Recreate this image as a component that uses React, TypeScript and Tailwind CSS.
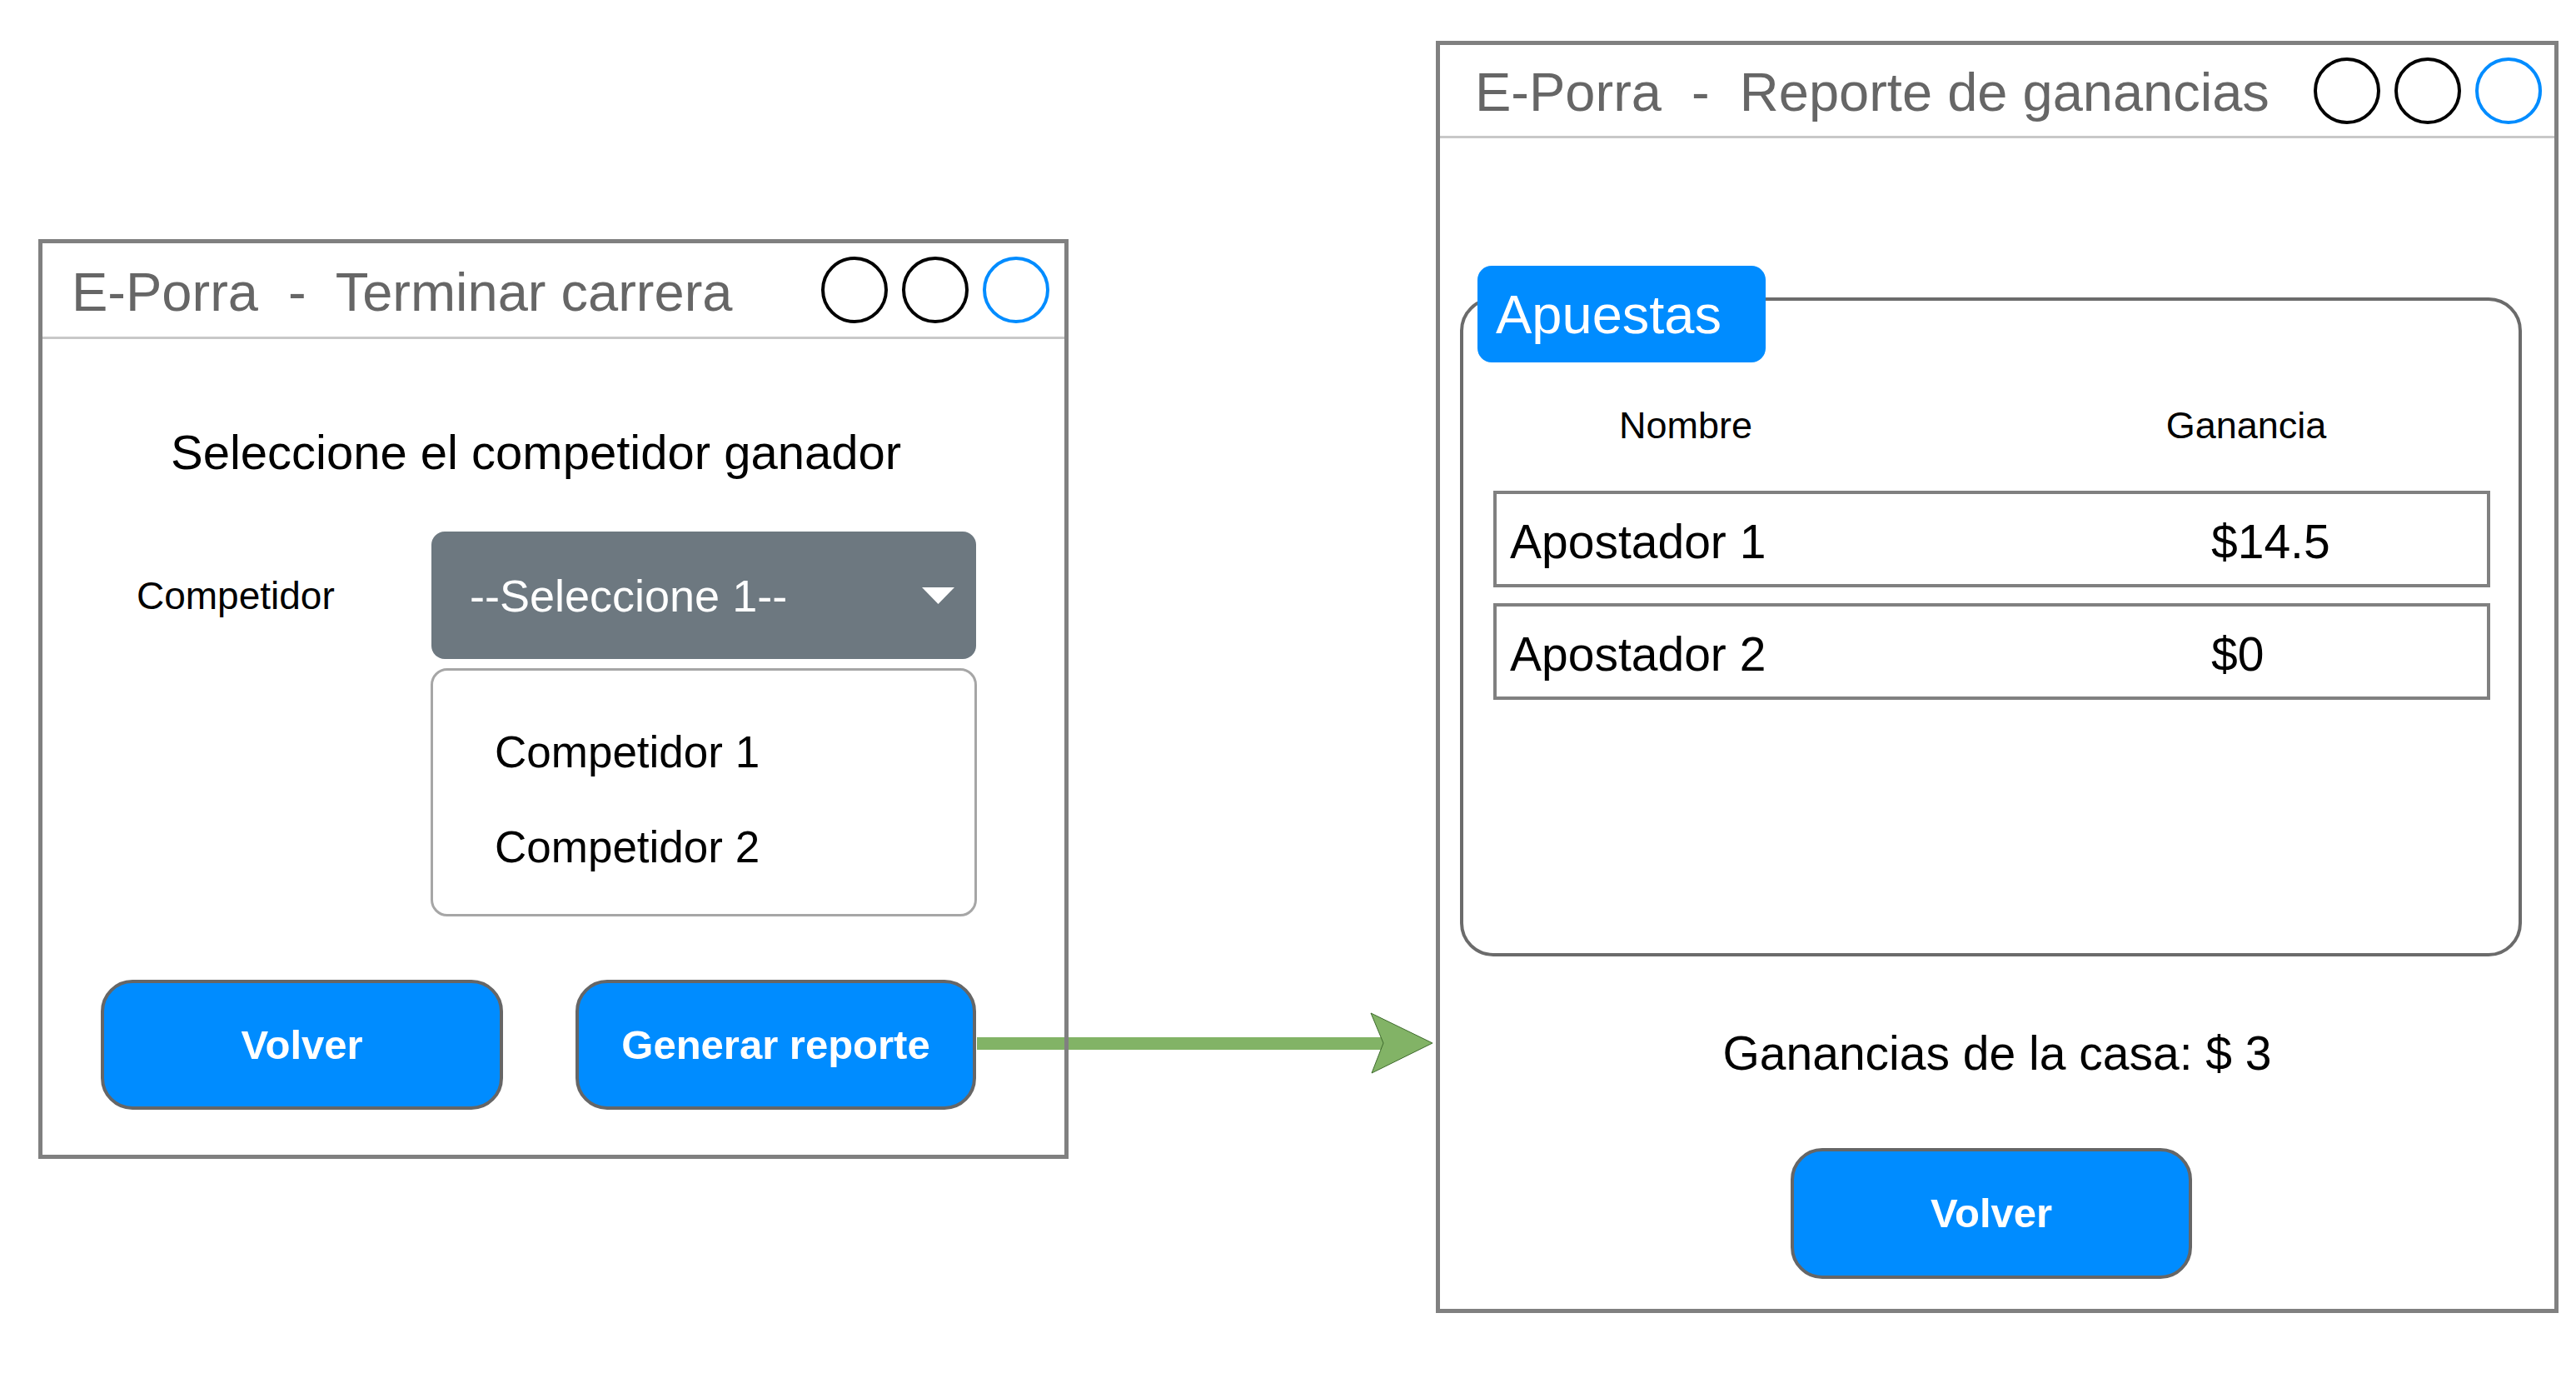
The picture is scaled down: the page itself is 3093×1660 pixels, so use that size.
const font = "font-['Liberation_Sans',Arial,sans-serif]";

function WindowDots() {
  return (
    <div className="flex items-center gap-[17px]">
      <span className="block w-[80px] h-[80px] rounded-full border-[4px] border-black" />
      <span className="block w-[80px] h-[80px] rounded-full border-[4px] border-black" />
      <span className="block w-[80px] h-[80px] rounded-full border-[4px] border-[#008cff]" />
    </div>
  );
}

function BlueButton({ label, className }: { label: string; className: string }) {
  return (
    <button
      className={`flex items-center justify-center rounded-[38px] border-[4px] border-[#666666] bg-[#008cff] text-[49px] font-bold text-white leading-none ${className}`}
    >
      {label}
    </button>
  );
}

function Arrow() {
  return (
    <svg
      className="absolute left-[1173px] top-[1210px]"
      width="552"
      height="86"
      viewBox="0 0 552 86"
    >
      <rect x="0" y="35" width="490" height="15" fill="#82b366" />
      <polygon
        points="473,6 547,42 474,78 488,42"
        fill="#82b366"
        stroke="#3f6b2e"
        strokeWidth="1"
        strokeLinejoin="miter"
      />
    </svg>
  );
}

export default function App() {
  return (
    <div className={`relative w-[3093px] h-[1660px] overflow-hidden bg-white ${font}`}>
      <Arrow />

      {/* Terminar carrera */}
      <div className="absolute left-[46px] top-[287px] w-[1237px] h-[1104px] border-[5px] border-[#808080] flex flex-col">
        <div className="h-[115px] border-b-[3px] border-[#c8c8c8] flex items-center justify-between pl-[35px] pr-[18px]">
          <span className="text-[65px] leading-none text-[#666666] whitespace-pre pt-[4px]">
            E-Porra  -  Terminar carrera
          </span>
          <WindowDots />
        </div>

        <div className="flex flex-col">
          <p className="mt-[107px] pl-[154px] text-[58px] leading-none text-black">
            Seleccione el competidor ganador
          </p>

          <div className="mt-[66px] flex items-center pl-[113px]">
            <span className="w-[354px] text-[46px] leading-none text-black">Competidor</span>
            <div className="w-[654px] h-[153px] rounded-[16px] bg-[#6d7880] flex items-center justify-between pl-[46px] pr-[26px]">
              <span className="text-[54px] leading-none text-white">--Seleccione 1--</span>
              <svg width="39" height="20" viewBox="0 0 39 20">
                <polygon points="0,0 39,0 19.5,20" fill="#ffffff" />
              </svg>
            </div>
          </div>

          <div className="mt-[11px] ml-[466px] w-[656px] h-[298px] rounded-[20px] border-[3px] border-[#a6a6a6] flex flex-col pt-[71px] pl-[74px] gap-[61px]">
            <span className="text-[53px] leading-none text-black">Competidor 1</span>
            <span className="text-[53px] leading-none text-black">Competidor 2</span>
          </div>

          <div className="mt-[76px] ml-[70px] flex gap-[87px]">
            <BlueButton label="Volver" className="w-[483px] h-[156px]" />
            <BlueButton label="Generar reporte" className="w-[481px] h-[156px]" />
          </div>
        </div>
      </div>

      {/* Reporte de ganancias */}
      <div className="absolute left-[1724px] top-[49px] w-[1348px] h-[1527px] border-[5px] border-[#808080] flex flex-col">
        <div className="h-[112px] border-b-[3px] border-[#c8c8c8] flex items-center justify-between pl-[42px] pr-[15px]">
          <span className="text-[65px] leading-none text-[#666666] whitespace-pre pt-[4px]">
            E-Porra  -  Reporte de ganancias
          </span>
          <WindowDots />
        </div>

        <div className="flex flex-col">
          <div className="relative mt-[191px] ml-[24px] w-[1275px] h-[791px] rounded-[40px] border-[4px] border-[#6b6b6b]">
            <div className="absolute left-[17px] top-[-42px] w-[346px] h-[116px] rounded-[17px] bg-[#008cff] flex items-center pl-[22px]">
              <span className="text-[65px] leading-none text-white">Apuestas</span>
            </div>

            <div className="mt-[127px] flex pl-[36px] text-[45px] leading-none text-black">
              <span className="w-[462px] text-center">Nombre</span>
              <span className="ml-[242px] w-[400px] text-center">Ganancia</span>
            </div>

            <div className="mt-[56px] ml-[36px] flex flex-col gap-[19px]">
              {[
                { name: "Apostador 1", value: "$14.5" },
                { name: "Apostador 2", value: "$0" },
              ].map((row) => (
                <div
                  key={row.name}
                  className="w-[1197px] h-[116px] border-[4px] border-[#808080] flex items-center pl-[16px] pt-[6px] text-[57px] leading-none text-black"
                >
                  <span className="w-[842px]">{row.name}</span>
                  <span>{row.value}</span>
                </div>
              ))}
            </div>
          </div>

          <p className="mt-[88px] text-center text-[57px] leading-none text-black">
            Ganancias de la casa: $ 3
          </p>

          <div className="mt-[85px] ml-[421px]">
            <BlueButton label="Volver" className="w-[482px] h-[157px]" />
          </div>
        </div>
      </div>
    </div>
  );
}
